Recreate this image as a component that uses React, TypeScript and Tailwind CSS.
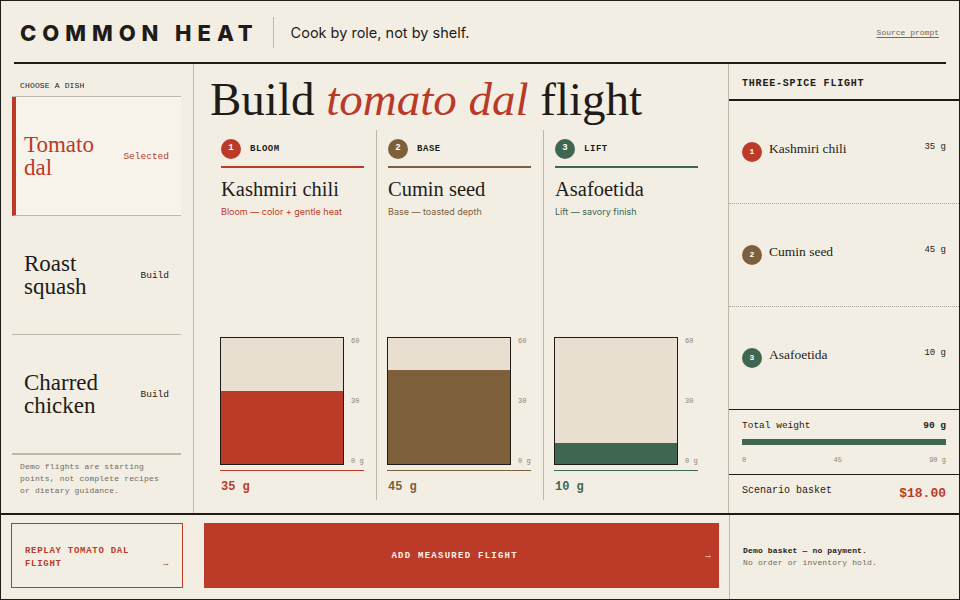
// Common Heat — spice flight builder screen
import clsx from "clsx";

const serif = "font-['Liberation_Serif',serif]";
const mono = "font-['Liberation_Mono',monospace]";
const sans = "font-['Inter',sans-serif]";

const dishes = [
  { id: "dal", lines: ["Tomato", "dal"], selected: true },
  { id: "squash", lines: ["Roast", "squash"], selected: false },
  { id: "chicken", lines: ["Charred", "chicken"], selected: false },
];

const spices = [
  {
    step: 1,
    role: "BLOOM",
    name: "Kashmiri chili",
    note: "Bloom — color + gentle heat",
    grams: 35,
    bg: "bg-[#bb3b28]",
    text: "text-[#bb3b28]",
    border: "border-[#bb3b28]",
  },
  {
    step: 2,
    role: "BASE",
    name: "Cumin seed",
    note: "Base — toasted depth",
    grams: 45,
    bg: "bg-[#7d5f3a]",
    text: "text-[#7d5f3a]",
    border: "border-[#7d5f3a]",
  },
  {
    step: 3,
    role: "LIFT",
    name: "Asafoetida",
    note: "Lift — savory finish",
    grams: 10,
    bg: "bg-[#3f6651]",
    text: "text-[#3f6651]",
    border: "border-[#3f6651]",
  },
];

const MAX_GRAMS = 60;

function Header() {
  return (
    <header className="h-[63px] shrink-0 px-[13px]">
      <div className="flex h-full items-center border-b-2 border-[#1f1c18] pl-[6px] pr-[7px] pt-[2px]">
        <span className={clsx(sans, "text-[22px] font-extrabold leading-none tracking-[0.27em] text-[#1f1c18]")}>
          COMMON HEAT
        </span>
        <span className="ml-[14px] h-[31px] w-px bg-[#bfb7aa]" />
        <span className={clsx(sans, "ml-[17px] text-[14.5px] text-[#1f1c18]")}>Cook by role, not by shelf.</span>
        <a className={clsx(mono, "ml-auto text-[8px] text-[#6f6a62] underline underline-offset-2")}>Source prompt</a>
      </div>
    </header>
  );
}

function DishList() {
  return (
    <aside className="flex w-[193px] shrink-0 flex-col border-r border-[#bfb7aa] pl-[11px] pr-[12px] pt-[17px]">
      <p className={clsx(mono, "pl-[8px] text-[8px] leading-[10px] tracking-[0.02em] text-[#1f1c18]")}>CHOOSE A DISH</p>
      <div className="mt-[5px] border-t border-[#bfb7aa]">
        {dishes.map((dish) => (
          <div
            key={dish.id}
            className={clsx(
              "flex h-[119px] items-center justify-between border-b border-[#bfb7aa] pr-[12px]",
              dish.selected ? "border-l-4 border-l-[#bb3b28] bg-[#f7f3ea] pl-[8px]" : "pl-[12px]"
            )}
          >
            <div className={clsx(serif, "text-[23px] leading-[23px]", dish.selected ? "text-[#bb3b28]" : "text-[#1f1c18]")}>
              {dish.lines.map((l) => (
                <div key={l}>{l}</div>
              ))}
            </div>
            <span className={clsx(mono, "mt-[2px] text-[9.5px]", dish.selected ? "text-[#bb3b28]" : "text-[#1f1c18]")}>
              {dish.selected ? "Selected" : "Build"}
            </span>
          </div>
        ))}
      </div>
      <div className="border-t border-[#bfb7aa] pl-[8px] pr-[14px] pt-[6px]">
        <p className={clsx(mono, "text-[8px] leading-[12px] tracking-[0.02em] text-[#6f6a62]")}>
          Demo flights are starting points, not complete recipes or dietary guidance.
        </p>
      </div>
    </aside>
  );
}

function SpiceColumn({ spice, first }: { spice: (typeof spices)[number]; first: boolean }) {
  return (
    <div className={clsx("flex flex-col justify-between pr-[12px] pb-[6px] pt-[9px]", first ? "pl-[12px]" : "border-l border-[#bfb7aa] pl-[11px]")}>
      <div>
        <div className={clsx("flex items-center border-b-2 pb-[7px]", spice.border)}>
          <span className={clsx(mono, "flex h-[20px] w-[20px] items-center justify-center rounded-full text-[9px] font-bold text-white", spice.bg)}>
            {spice.step}
          </span>
          <span className={clsx(mono, "ml-[9px] mt-[2px] text-[9px] font-bold tracking-[0.06em] text-[#1f1c18]")}>{spice.role}</span>
        </div>
        <h3 className={clsx(serif, "mt-[9px] text-[20.5px] leading-[24px] text-[#1f1c18]")}>{spice.name}</h3>
        <p className={clsx(sans, "mt-[5px] text-[9px] leading-[12px]", spice.text)}>{spice.note}</p>
      </div>
      <div>
        <div className="flex">
          <div className="-ml-px flex h-[128px] w-[124px] flex-col justify-end border border-[#1f1c18] bg-[#e8dfd1]">
            <div className={spice.bg} style={{ height: `${(spice.grams / MAX_GRAMS) * 100}%` }} />
          </div>
          <div className={clsx(mono, "ml-[7px] flex h-[128px] flex-col justify-between text-[7px] leading-[8px] text-[#8a847a]")}>
            <span>60</span>
            <span>30</span>
            <span>0 g</span>
          </div>
        </div>
        <div className={clsx("-ml-px mt-[5px] border-t", spice.border)} />
        <p className={clsx(mono, "mt-[9px] text-[12px] font-bold leading-[14px]", spice.text)}>{spice.grams} g</p>
      </div>
    </div>
  );
}

function Builder() {
  return (
    <section className="flex min-w-0 flex-1 flex-col pl-[15px] pt-[11px] pb-[13px]">
      <h1 className={clsx(serif, "pl-px text-[47px] leading-[48px] text-[#1f1c18]")}>
        Build <em className="text-[#b83a28]">tomato dal</em> flight
      </h1>
      <div className="mt-[7px] grid flex-1 grid-cols-[167px_167px_167px]">
        {spices.map((s, i) => (
          <SpiceColumn key={s.role} spice={s} first={i === 0} />
        ))}
      </div>
    </section>
  );
}

function FlightSummary() {
  const total = spices.reduce((sum, s) => sum + s.grams, 0);
  return (
    <aside className="flex w-[231px] shrink-0 flex-col border-l border-[#bfb7aa]">
      <div className="flex h-[37px] items-center border-b-2 border-[#1f1c18] px-[13px] pt-[3px]">
        <span className={clsx(mono, "text-[10px] font-bold tracking-[0.08em] text-[#1f1c18]")}>THREE-SPICE FLIGHT</span>
      </div>
      <div className="flex flex-1 flex-col">
        {spices.map((s, i) => (
          <div
            key={s.role}
            className={clsx("flex flex-1 items-center px-[13px]", i < spices.length - 1 && "border-b border-dotted border-[#a9a296]")}
          >
            <span className={clsx(mono, "flex h-[20px] w-[20px] items-center justify-center rounded-full text-[8px] font-bold text-white", s.bg)}>
              {s.step}
            </span>
            <span className={clsx(serif, "mb-[5px] ml-[7px] text-[13.5px] text-[#1f1c18]")}>{s.name}</span>
            <span className={clsx(mono, "mb-[9px] ml-auto text-[9px] text-[#1f1c18]")}>{s.grams} g</span>
          </div>
        ))}
      </div>
      <div className="h-[66px] border-y border-[#1f1c18] px-[13px] pt-[10px]">
        <div className={clsx(mono, "flex justify-between text-[9.5px] leading-[12px] text-[#1f1c18]")}>
          <span>Total weight</span>
          <span className="font-bold">{total} g</span>
        </div>
        <div className="mt-[7px] h-[6px] bg-[#3f6651]" />
        <div className={clsx(mono, "mt-[11px] flex justify-between text-[7px] leading-[8px] text-[#8a847a]")}>
          <span>0</span>
          <span>45</span>
          <span>90 g</span>
        </div>
      </div>
      <div className="flex h-[38px] items-start justify-between px-[13px] pt-[10px]">
        <span className={clsx(mono, "text-[10px] leading-[12px] text-[#1f1c18]")}>Scenario basket</span>
        <span className={clsx(mono, "mt-[1px] text-[13px] font-bold leading-[16px] text-[#bb3b28]")}>$18.00</span>
      </div>
    </aside>
  );
}

function Footer() {
  return (
    <footer className="flex flex-1 border-t-2 border-[#1f1c18]">
      <div className="w-[193px] shrink-0 pl-[10px] pt-[8px]">
        <button
          className={clsx(mono, "flex h-[65px] w-[172px] items-end justify-between border border-[#bb3b28] pb-[16px] pl-[13px] pr-[13px] text-left text-[9px] font-bold leading-[13px] tracking-[0.08em] text-[#bb3b28]")}
        >
          <span>
            REPLAY TOMATO DAL
            <br />
            FLIGHT
          </span>
          <span>→</span>
        </button>
      </div>
      <div className="min-w-0 flex-1 px-[10px] pt-[8px]">
        <button className={clsx(mono, "flex h-[65px] w-full items-center bg-[#bb3b28] pr-[7px] pt-[3px] text-[9px] font-bold tracking-[0.14em] text-[#f7f3ea]")}>
          <span className="flex-1 text-center">ADD MEASURED FLIGHT</span>
          <span>→</span>
        </button>
      </div>
      <div className="flex w-[230px] shrink-0 flex-col justify-center border-l border-[#bfb7aa] pl-[13px]">
        <p className={clsx(mono, "text-[8px] font-bold leading-[12px] tracking-[0.02em] text-[#1f1c18]")}>Demo basket — no payment.</p>
        <p className={clsx(mono, "text-[8px] leading-[12px] tracking-[0.02em] text-[#6f6a62]")}>No order or inventory hold.</p>
      </div>
    </footer>
  );
}

export default function App() {
  return (
    <div className="flex h-[600px] w-[960px] flex-col overflow-hidden border border-[#1f1c18] bg-[#f2eee3]">
      <Header />
      <main className="flex h-[449px] shrink-0">
        <DishList />
        <Builder />
        <FlightSummary />
      </main>
      <Footer />
    </div>
  );
}
